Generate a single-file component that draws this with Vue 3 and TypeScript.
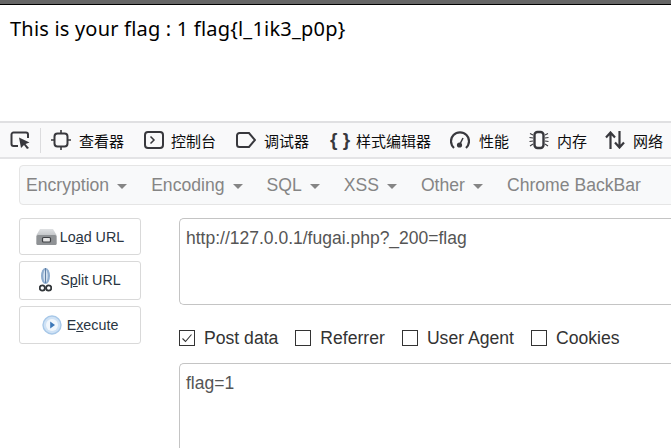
<script setup lang="ts">
const menus = [
  { label: 'Encryption', caret: true },
  { label: 'Encoding', caret: true },
  { label: 'SQL', caret: true },
  { label: 'XSS', caret: true },
  { label: 'Other', caret: true },
  { label: 'Chrome BackBar', caret: false },
]
const checks = [
  { label: 'Post data', on: true },
  { label: 'Referrer', on: false },
  { label: 'User Agent', on: false },
  { label: 'Cookies', on: false },
]
</script>

<template>
  <div class="page">
    <div class="topbar"></div>
    <div class="flag">This is your flag : 1 flag{l_1ik3_p0p}</div>

    <div class="devtools">
      <svg class="picker" width="20" height="18" viewBox="0 0 20 18">
        <path d="M8 15H3.5A2 2 0 0 1 1.5 13V3.5A2 2 0 0 1 3.5 1.5H16A2 2 0 0 1 18 3.5V7" fill="none" stroke="#38383d" stroke-width="2" />
        <path d="M9 6.5 19.5 11.5 15.5 13 19 17 17 18 14 14 11 17Z" fill="#38383d" />
      </svg>
      <span class="sep"></span>
      <div class="tab t1">
        <svg width="20" height="20" viewBox="0 0 20 20">
          <rect x="3.5" y="3.5" width="13" height="13" rx="3" fill="none" stroke="#38383d" stroke-width="2" />
          <path d="M10 0V3M10 17V20M0 10H3M17 10H20" stroke="#38383d" stroke-width="1.6" />
        </svg>
        <span>查看器</span>
      </div>
      <div class="tab t2">
        <svg width="20" height="18" viewBox="0 0 20 18">
          <rect x="1" y="1" width="18" height="16" rx="3" fill="none" stroke="#38383d" stroke-width="2" />
          <path d="M6.5 5.5 10 9 6.5 12.5" fill="none" stroke="#38383d" stroke-width="1.5" />
        </svg>
        <span>控制台</span>
      </div>
      <div class="tab t3">
        <svg width="20" height="16" viewBox="0 0 20 16">
          <path d="M3.5 1H13L19 8 13 15H3.5A2.5 2.5 0 0 1 1 12.5V3.5A2.5 2.5 0 0 1 3.5 1Z" fill="none" stroke="#38383d" stroke-width="2" />
        </svg>
        <span>调试器</span>
      </div>
      <div class="tab t4">
        <span class="braces">{ }</span>
        <span>样式编辑器</span>
      </div>
      <div class="tab t5">
        <svg width="20" height="18" viewBox="0 0 20 18">
          <path d="M4 17A9 9 0 1 1 16 17" fill="none" stroke="#38383d" stroke-width="2.2" />
          <circle cx="9.5" cy="14" r="2.6" fill="#38383d" />
          <path d="M9.5 14 13 7" stroke="#38383d" stroke-width="1.5" />
        </svg>
        <span>性能</span>
      </div>
      <div class="tab t6">
        <svg width="20" height="20" viewBox="0 0 20 20">
          <rect x="5.5" y="2" width="9" height="16" rx="3" fill="none" stroke="#38383d" stroke-width="2.4" />
          <path d="M4 5 1 3.5M4 8 .5 7.5M4 11 .5 11.5M4 14 1 16M16 5 19 3.5M16 8 19.5 7.5M16 11 19.5 11.5M16 14 19 16" stroke="#38383d" stroke-width="1.1" />
        </svg>
        <span>内存</span>
      </div>
      <div class="tab t7">
        <svg width="20" height="18" viewBox="0 0 20 18">
          <path d="M5.5 18V2M1 6.5 5.5 1.5 10 6.5M14.5 0V16M10 11.5 14.5 16.5 19 11.5" fill="none" stroke="#38383d" stroke-width="2.2" />
        </svg>
        <span>网络</span>
      </div>
    </div>

    <div class="hackbar">
      <div v-for="m in menus" :key="m.label" class="menu">
        {{ m.label }}<i v-if="m.caret" class="caret"></i>
      </div>
    </div>

    <div class="main">
      <div class="actions">
        <div class="btn b1">
          <svg width="21" height="17" viewBox="0 0 21 17">
            <defs>
              <linearGradient id="drive" x1="0" y1="0" x2="0" y2="1">
                <stop offset="0" stop-color="#dfe1e3" />
                <stop offset="1" stop-color="#9b9ea2" />
              </linearGradient>
            </defs>
            <path d="M4 1H17L20.5 7V15.5A1.5 1.5 0 0 1 19 17H2A1.5 1.5 0 0 1 .5 15.5V7Z" fill="url(#drive)" />
            <rect x=".5" y="7" width="20" height="10" rx="1.5" fill="#8f9295" />
            <rect x="6.5" y="9.5" width="8" height="4.5" rx="1" fill="#e4e4e4" stroke="#3e4044" stroke-width="1.2" />
          </svg>
          <span>Lo<u>a</u>d URL</span>
        </div>
        <div class="btn b2">
          <svg width="13" height="24" viewBox="0 0 13 24">
            <ellipse cx="6.5" cy="8" rx="4.5" ry="8" fill="#8fadcf" />
            <ellipse cx="6.5" cy="8" rx="2.2" ry="6.5" fill="#d5e2f0" />
            <path d="M6.5 0V15" stroke="#5f7fa5" stroke-width="1" />
            <circle cx="3.3" cy="20" r="2.6" fill="none" stroke="#33373b" stroke-width="1.8" />
            <circle cx="9.7" cy="20" r="2.6" fill="none" stroke="#33373b" stroke-width="1.8" />
          </svg>
          <span>S<u>p</u>lit URL</span>
        </div>
        <div class="btn b3">
          <svg width="20" height="20" viewBox="0 0 20 20">
            <circle cx="10" cy="10" r="9" fill="#cfe2f5" stroke="#a8c8e8" stroke-width="1.4" />
            <circle cx="10" cy="10" r="6" fill="#f2f7fc" />
            <path d="M8.2 6.5 13 10 8.2 13.5Z" fill="#3d78b8" />
          </svg>
          <span>E<u>x</u>ecute</span>
        </div>
      </div>

      <div class="form">
        <div class="area url">http://127.0.0.1/fugai.php?_200=flag</div>
        <div class="checks">
          <label v-for="c in checks" :key="c.label" class="check">
            <span class="box">
              <svg v-if="c.on" width="14" height="14" viewBox="0 0 14 14">
                <path d="M2.5 7.5 5.5 10.5 11.5 3.5" fill="none" stroke="#333" stroke-width="1.1" />
              </svg>
            </span>
            <span>{{ c.label }}</span>
          </label>
        </div>
        <div class="area post">flag=1</div>
      </div>
    </div>
  </div>
</template>

<style>
html, body {
  margin: 0;
  background: #fff;
  overflow: hidden;
}
</style>

<style scoped>
.page {
  width: 671px;
  height: 448px;
  overflow: hidden;
  background: #fff;
  font-family: "Liberation Sans", Arial, sans-serif;
}
.topbar {
  height: 4px;
  background: #666;
  border-bottom: 1px solid #000;
}
.flag {
  height: 116px;
  box-sizing: border-box;
  padding: 10px 0 0 10px;
  font-family: "Noto Sans", "Open Sans", sans-serif;
  font-size: 20px;
  letter-spacing: 0.2px;
  line-height: 28px;
  color: #000;
}
.devtools {
  height: 34px;
  display: flex;
  align-items: center;
  background: #f9f9fa;
  border-top: 2px solid #e0e0e2;
  border-bottom: 2px solid #e4e4e6;
  font-family: "Noto Sans CJK SC", sans-serif;
  font-size: 15px;
  color: #0c0c0d;
  white-space: nowrap;
}
.picker {
  margin-left: 10px;
  flex: none;
}
.sep {
  width: 1px;
  height: 25px;
  margin-left: 10px;
  background: #dcdcde;
  flex: none;
}
.tab {
  display: flex;
  align-items: center;
  gap: 8px;
  flex: none;
}
.t1 { margin-left: 10px; }
.t2 { margin-left: 20px; gap: 7px; }
.t3 { margin-left: 20px; }
.t4 { margin-left: 20px; gap: 6px; }
.t5 { margin-left: 19px; gap: 9px; }
.t6 { margin-left: 20px; }
.t7 { margin-left: 18px; }
.braces {
  width: 21px;
  box-sizing: border-box;
  padding-left: 1px;
  font-family: "Liberation Sans", sans-serif;
  font-size: 19px;
  font-weight: 700;
  color: #38383d;
}
.hackbar {
  display: flex;
  align-items: center;
  height: 40px;
  box-sizing: border-box;
  margin: 6px 0 0 19px;
  padding-left: 6px;
  gap: 24px;
  width: 680px;
  background: #f8f9fa;
  border: 1px solid #e5e5e5;
  border-radius: 4px;
  font-size: 17.6px;
  color: #858585;
  white-space: nowrap;
}
.menu {
  display: flex;
  align-items: center;
  flex: none;
}
.caret {
  width: 0;
  height: 0;
  margin-left: 8px;
  margin-top: 2px;
  border-left: 5px solid transparent;
  border-right: 5px solid transparent;
  border-top: 5px solid #858585;
}
.main {
  display: flex;
  margin-top: 13px;
  margin-left: 19px;
}
.actions {
  width: 122px;
  flex: none;
  display: flex;
  flex-direction: column;
  gap: 6px;
}
.btn {
  box-sizing: border-box;
  display: flex;
  align-items: center;
  justify-content: center;
  background: #fff;
  border: 1px solid #d9d9d9;
  border-radius: 3px;
  font-size: 14.3px;
  color: #2a3542;
}
.b1 { height: 37px; gap: 3px; }
.b2 { height: 39px; gap: 8px; padding-bottom: 2px; }
.b3 { height: 38px; gap: 5px; }
.form {
  margin-left: 38px;
  width: 520px;
  flex: none;
}
.area {
  box-sizing: border-box;
  border: 1px solid #c4c4c4;
  border-radius: 5px 0 0 5px;
  border-right: 0;
  padding: 9px 6px;
  font-size: 17.5px;
  line-height: 20px;
  color: #555;
  background: #fff;
}
.url { height: 87px; }
.post { height: 100px; border-bottom: 0; border-radius: 5px 0 0 0; }
.checks {
  box-sizing: border-box;
  display: flex;
  align-items: center;
  height: 58px;
  padding-top: 8px;
  font-size: 17.6px;
  color: #333;
}
.check {
  display: flex;
  align-items: center;
  gap: 9px;
  margin-right: 17px;
}
.box {
  box-sizing: border-box;
  width: 16px;
  height: 16px;
  border: 1px solid #333;
  display: flex;
  align-items: center;
  justify-content: center;
  background: #fff;
}
</style>
